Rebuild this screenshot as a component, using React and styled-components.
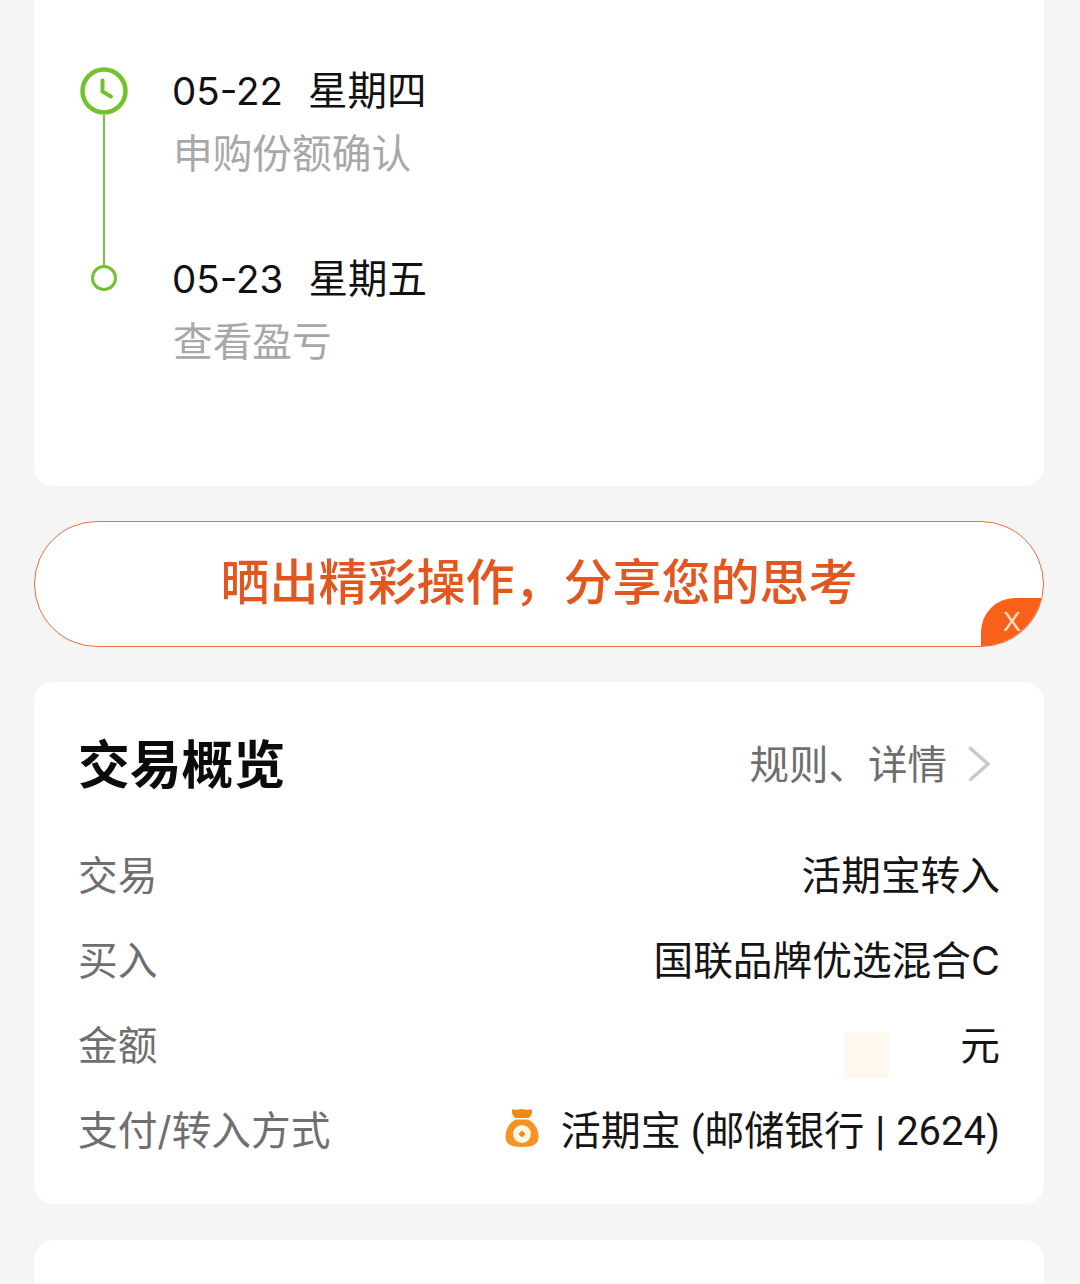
import React from "react";
import styled, { createGlobalStyle } from "styled-components";

const GlobalStyle = createGlobalStyle`
  html, body {
    margin: 0;
    padding: 0;
    background: #f5f5f5;
  }
  * {
    box-sizing: border-box;
  }
`;

const Page = styled.div`
  width: 1080px;
  height: 1284px;
  overflow: hidden;
  padding: 0 36px 0 34px;
  display: flex;
  flex-direction: column;
  font-family: Inter, "Noto Sans CJK SC", "Noto Sans", sans-serif;
  background: #f5f5f5;
`;

const TimelineCard = styled.section`
  flex: none;
  height: 486px;
  background: #fff;
  border-radius: 0 0 20px 20px;
  padding: 67px 0 0 45px;
  display: flex;
  flex-direction: column;
`;

const Step = styled.div`
  height: ${(props) => props.$height}px;
  display: flex;
`;

const Rail = styled.div`
  flex: none;
  display: flex;
  flex-direction: column;
  align-items: center;
  width: 49px;
  margin-right: 44px;
`;

const Line = styled.div`
  width: 2px;
  height: ${(props) => props.$height}px;
  background: #7cc142;
`;

const RingDot = styled.div`
  width: 26px;
  height: 26px;
  border: 3px solid #74c12f;
  border-radius: 50%;
`;

const StepText = styled.div`
  display: flex;
  flex-direction: column;
  padding-top: 1px;
`;

const StepDate = styled.div`
  height: 46px;
  display: flex;
  gap: 25px;
  align-items: center;
  font-size: 38.5px;
  line-height: 46px;
  color: #111;
`;

const StepWeekday = styled.span`
  font-size: 39.5px;
`;

const StepNote = styled.div`
  margin: 17px 0 0 1px;
  height: 46px;
  font-size: 39.7px;
  line-height: 46px;
  color: #a8a8a8;
`;

const ShareBanner = styled.div`
  flex: none;
  position: relative;
  height: 126px;
  margin-top: 35px;
  padding-bottom: 12px;
  background: #fff;
  border: 1.5px solid #e8703a;
  border-radius: 63px;
  overflow: hidden;
  display: flex;
  align-items: center;
  justify-content: center;
  font-size: 49px;
  font-weight: 500;
  color: #e2571f;
`;

const CloseMark = styled.div`
  position: absolute;
  right: 0;
  bottom: 0;
  width: 62px;
  height: 48px;
  background: #f9601a;
  border-radius: 34px 0 0 0;
  display: flex;
  align-items: center;
  justify-content: center;
  font-family: "Liberation Sans", sans-serif;
  font-size: 27px;
  font-weight: 400;
  color: #ffe3c4;
`;

const OverviewCard = styled.section`
  flex: none;
  height: 522px;
  margin-top: 35px;
  background: #fff;
  border-radius: 20px;
  padding: 52px 44px 0 45px;
  display: flex;
  flex-direction: column;
`;

const CardHeader = styled.div`
  height: 60px;
  display: flex;
  align-items: center;
  justify-content: space-between;
  margin-bottom: 36px;
`;

const CardTitle = styled.h2`
  margin: 2px 0 0 -1px;
  font-size: 51.8px;
  line-height: 60px;
  font-weight: 700;
  color: #0b0b0b;
`;

const HeaderLink = styled.div`
  display: flex;
  align-items: center;
  font-size: 39.5px;
  line-height: 46px;
  padding-top: 2px;
  color: #6e6e6e;

  svg {
    margin-left: 20px;
    margin-right: 9px;
    margin-top: -2px;
  }
`;

const Row = styled.div`
  height: 85px;
  display: flex;
  align-items: center;
  justify-content: space-between;
  font-size: 39.7px;
`;

const Label = styled.span`
  margin-left: -1px;
  color: #6f6f6f;
`;

const Value = styled.span`
  display: flex;
  align-items: center;
  color: #151515;
`;

const MaskedAmount = styled.span`
  width: 44px;
  height: 46px;
  margin: 24px 71px 0 0;
  background: #fff8ef;
`;

const Payment = styled.span`
  margin-left: 22px;
  font-family: Roboto, "Noto Sans CJK SC", sans-serif;
  font-size: 40px;
  white-space: pre;
`;

const PaymentBar = styled.span`
  margin: 0 1px;
  font-size: 40px;
  font-weight: 500;
`;

const NextCard = styled.section`
  flex: none;
  height: 60px;
  margin-top: 36px;
  background: #fff;
  border-radius: 20px 20px 0 0;
`;

const ClockIcon = () => (
  <svg width="48" height="48" viewBox="0 0 48 48" fill="none">
    <circle cx="24" cy="24" r="21.500" stroke="#74c12f" strokeWidth="4.500" />
    <path d="M22.500 13.500V24.500L31 29.500" stroke="#74c12f" strokeWidth="4" strokeLinecap="round" strokeLinejoin="round" />
  </svg>
);

const ChevronIcon = () => (
  <svg width="24" height="38" viewBox="0 0 24 38" fill="none">
    <path d="M2.500 2.500L21 19L2.500 35.500" stroke="#c9c9c9" strokeWidth="3.500" />
  </svg>
);

const MoneyBagIcon = () => (
  <svg width="34" height="40" viewBox="0 0 34 40">
    <path d="M8 1C11 3 14 1 17 1C20 1 23 3 26 1C28 3 27 7 24 10H10C7 7 6 3 8 1Z" fill="#f28a12" />
    <path d="M11 11.500H23C29 14 33.500 21 33.500 29C33.500 36 28 39 17 39C6 39 0.500 36 0.500 29C0.500 21 5 14 11 11.500Z" fill="#f7931e" />
    <circle cx="17" cy="26" r="9" fill="#fff6e8" />
    <path d="M17 22.500L20.500 26L17 29.500L13.500 26Z" fill="#f28a12" />
  </svg>
);

const rows = [
  { label: "交易", value: "活期宝转入" },
  { label: "买入", value: "国联品牌优选混合C" },
];

const App = () => (
  <Page>
    <GlobalStyle />
    <TimelineCard>
      <Step $height={188}>
        <Rail>
          <ClockIcon />
          <Line $height={140} />
        </Rail>
        <StepText>
          <StepDate>
            <span>05-22</span>
            <StepWeekday>星期四</StepWeekday>
          </StepDate>
          <StepNote>申购份额确认</StepNote>
        </StepText>
      </Step>
      <Step $height={150}>
        <Rail>
          <Line $height={10} />
          <RingDot />
        </Rail>
        <StepText>
          <StepDate>
            <span>05-23</span>
            <StepWeekday>星期五</StepWeekday>
          </StepDate>
          <StepNote>查看盈亏</StepNote>
        </StepText>
      </Step>
    </TimelineCard>

    <ShareBanner>
      晒出精彩操作，分享您的思考
      <CloseMark>X</CloseMark>
    </ShareBanner>

    <OverviewCard>
      <CardHeader>
        <CardTitle>交易概览</CardTitle>
        <HeaderLink>
          规则、详情
          <ChevronIcon />
        </HeaderLink>
      </CardHeader>
      {rows.map((row) => (
        <Row key={row.label}>
          <Label>{row.label}</Label>
          <Value>{row.value}</Value>
        </Row>
      ))}
      <Row>
        <Label>金额</Label>
        <Value>
          <MaskedAmount />元
        </Value>
      </Row>
      <Row>
        <Label>支付/转入方式</Label>
        <Value>
          <MoneyBagIcon />
          <Payment>
            活期宝 (邮储银行 <PaymentBar>|</PaymentBar> 2624)
          </Payment>
        </Value>
      </Row>
    </OverviewCard>

    <NextCard />
  </Page>
);

export default App;
